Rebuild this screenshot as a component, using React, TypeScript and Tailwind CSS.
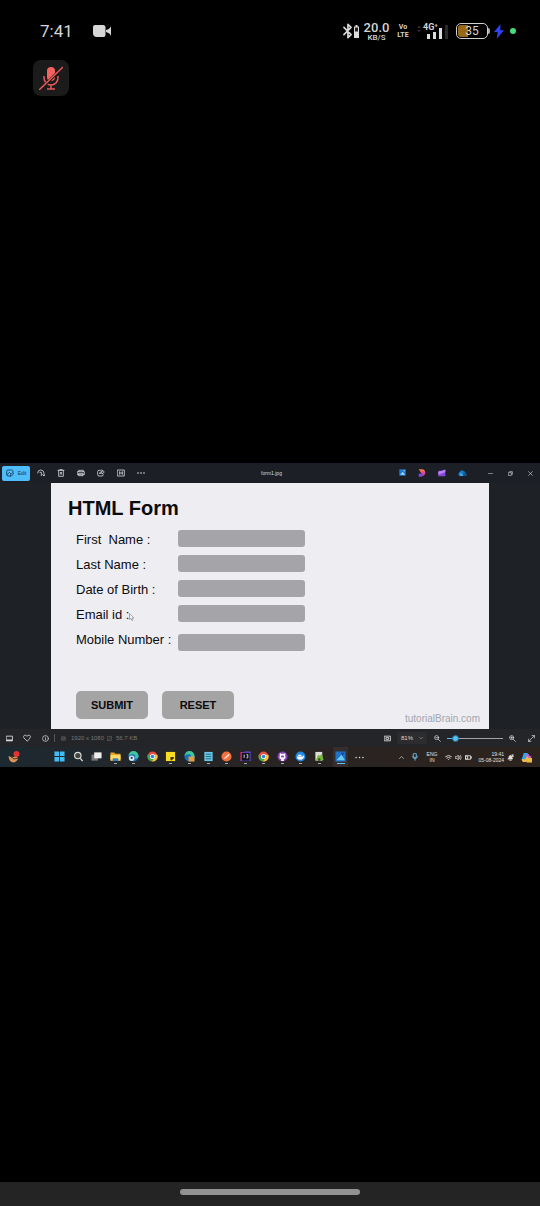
import type { ReactNode } from "react";

type IconProps = { children: ReactNode; className?: string; box?: string; width?: number };

function Line({ children, className = "size-2", box = "0 0 24 24", width = 2.4 }: IconProps) {
  return (
    <svg viewBox={box} className={className} fill="none" stroke="currentColor" strokeWidth={width} strokeLinecap="round" strokeLinejoin="round" aria-hidden="true">
      {children}
    </svg>
  );
}

function Art({ children, className = "size-3", box = "0 0 24 24" }: IconProps) {
  return (
    <svg viewBox={box} className={className} aria-hidden="true">
      {children}
    </svg>
  );
}

function StatusBar() {
  return (
    <header className="flex h-15 items-center pt-0.5 pr-6 pl-10 text-[#d4d4d4]">
      <time className="w-[34px] font-['Roboto',sans-serif] text-[17px] leading-6">7:41</time>
      <Art className="ml-[19px] h-3.5 w-[18px]" box="0 0 18 14">
        <path d="M2 1h8q2.500 0 2.500 2.500V11q0 2-2 2H4Q0 13 0 9V3q0-2 2-2Z" fill="#d6d6d6" />
        <path d="M13 6q4-1 5-4v10q-1-3-5-4Z" fill="#d6d6d6" />
      </Art>
      <div className="ml-auto flex items-center">
        <Line className="h-4 w-[11px]" box="0 0 11 18" width={1.9}>
          <path d="m1.500 5 8 8L6 16.500v-15L9.500 5l-8 8" />
        </Line>
        <Art className="ml-px h-[13px] w-[5px]" box="0 0 5 13">
          <path d="M1.500 0h2v1.500H5V13H0V1.500h1.500Z" fill="#ddd" />
          <path d="M1 2.500h3v4H1Z" fill="#222" />
        </Art>
        <div className="ml-1 w-[27px] text-center font-['Roboto',sans-serif] font-medium">
          <div className="text-[13px] leading-[13px]">20.0</div>
          <div className="text-[8px] leading-[8px]">KB/S</div>
        </div>
        <div className="ml-[7px] w-3 text-center font-['Roboto',sans-serif] text-[7px] leading-2 font-bold">
          <div>Vo</div>
          <div>LTE</div>
        </div>
        <Art className="ml-2 h-3 w-1" box="0 0 4 12">
          <path d="m0 3 2-2 2 2ZM0 5l2 2 2-2Z" fill="#333" />
        </Art>
        <div className="ml-0.5 w-[25px]">
          <div className="font-['Roboto',sans-serif] text-[9px] leading-2 font-bold">4G⁺</div>
          <div className="-mt-1.5 flex h-3.5 items-end justify-end gap-[3px]">
            <i className="h-[5px] w-[3px] bg-[#ddd]" />
            <i className="h-[7px] w-[3px] bg-[#ddd]" />
            <i className="h-[11px] w-[3px] bg-[#ddd]" />
            <i className="h-3.5 w-[3px] bg-[#292929]" />
          </div>
        </div>
        <div className="ml-2 flex h-4 w-8 items-center overflow-hidden rounded-[5px] border border-[#d0d0d0] p-px">
          <span className="w-full rounded-[3px] bg-linear-to-r from-[#986819] from-35% to-black to-35% text-center font-['Roboto',sans-serif] text-[12px] leading-3">35</span>
        </div>
        <i className="h-1.5 w-0.5 rounded-r-sm bg-[#aaa]" />
        <Art className="ml-1 h-[15px] w-2.5" box="0 0 11 16">
          <path d="M7 0 0 8.500h4L3 16l8-9.500H7Z" fill="#3042f5" />
        </Art>
        <i className="ml-1.5 size-1.5 rounded-full bg-[#46db7c]" />
      </div>
    </header>
  );
}

const tools: { name: string; icon: ReactNode }[] = [
  { name: "Rotate", icon: <path d="M2 12q0-9 9-9t10 9v8M17 17l4 4 3-4M9 10h4v10" /> },
  { name: "Delete", icon: <path d="M3 4h18M5 4v18h14V4M9 4V1h6v3M10 10l4 6m0-6-4 6" /> },
  { name: "Print", icon: <path d="M5 8V4h14v4M2 8h20v9H2ZM6 13h12v7H6Z" /> },
  { name: "Share", icon: <path d="M10 4H6Q2 4 2 8v9q0 4 4 4h9q4 0 4-4M15 3l7 6-7 6v-4q-5 0-7 4 0-8 7-8Z" /> },
  { name: "Slideshow", icon: <path d="M2 3h20v18H2ZM8 8v8m8-8v8M8 12h8" /> },
  { name: "More", icon: <path strokeWidth="5" d="M3 12h.1M12 12h.1M21 12h.1" /> },
];

function TitleBar() {
  return (
    <div className="flex h-5 items-center bg-[#1c1f25] text-[#d8dadd]">
      <button className="mr-px ml-0.5 flex h-[15px] w-7 shrink-0 items-center justify-center gap-1 rounded-xs bg-[#4fbdfa] text-[#153450]">
        <Line className="size-2">
          <path d="M11 21H6q-4 0-4-5V7q0-4 4-4h11q4 0 4 4v3M3 17l7-7 4 4m-1 7 1-4 6-6 3 3-6 6Z" />
        </Line>
        <span className="text-[5px] leading-2">Edit</span>
      </button>
      {tools.map((t) => (
        <button key={t.name} aria-label={t.name} className="flex w-5 shrink-0 justify-center">
          <Line>{t.icon}</Line>
        </button>
      ))}
      <h1 className="flex-1 text-center text-[5px] leading-2">form1.jpg</h1>
      <div className="mr-2 flex">
        <button aria-label="Photos" className="flex w-5 justify-center">
          <Art className="size-[7px]">
            <path d="M1 1h22v22H1Z" fill="#2479d0" />
            <path d="m4 20 9-10 8 10ZM14 4h6v5Z" fill="#9be4ff" />
          </Art>
        </button>
        <button aria-label="Designer" className="flex w-5 justify-center">
          <Art className="size-2">
            <path d="M2 1h10q10 1 10 11H10Z" fill="#f5794a" />
            <path d="M10 7h10q4 8-2 12L9 23q6-7 1-16Z" fill="#e0499b" />
            <path d="M2 15q7-5 13 0l-4 8H2Z" fill="#7c48da" />
          </Art>
        </button>
        <button aria-label="Clipchamp" className="flex w-5 justify-center">
          <Art className="size-2">
            <path d="M1 5h12l9-4v21H1Z" fill="#8548d8" />
            <path d="M1 8 22 2v7L1 17Z" fill="#c083f5" />
          </Art>
        </button>
        <button aria-label="OneDrive" className="flex w-5 justify-center">
          <Art className="h-2 w-[9px]" box="0 0 28 24">
            <path d="M4 21q-7-6 1-11Q9 0 17 5q5 1 5 6 9 5 2 10Z" fill="#1674bd" />
            <path d="m5 10 10 4 9 7H6Z" fill="#39a5e9" />
            <circle cx="20" cy="17" r="5" fill="#164f85" />
          </Art>
        </button>
      </div>
      <div className="flex">
        <button aria-label="Minimize" className="flex w-5 justify-center">
          <Line className="size-[5px]"><path d="M2 12h20" /></Line>
        </button>
        <button aria-label="Restore" className="flex w-5 justify-center">
          <Line className="size-[5px]" width={3}><path d="M3 8h13v13H3ZM8 3h13v13" /></Line>
        </button>
        <button aria-label="Close" className="flex w-5 justify-center">
          <Line className="size-[5px]" width={3}><path d="m3 3 18 18M21 3 3 21" /></Line>
        </button>
      </div>
    </div>
  );
}

const fields = [
  { id: "first", label: "First  Name :" },
  { id: "last", label: "Last Name :" },
  { id: "birth", label: "Date of Birth :" },
  { id: "email", label: "Email id :" },
  { id: "mobile", label: "Mobile Number :" },
];

function FormPicture() {
  return (
    <div className="bg-[#1e2227] pr-[51px] pl-[51px]">
      <form className="bg-[#eeedf2] pt-[13px] pl-[17px] text-[#0b0b0e]">
        <h2 className="text-[20px] leading-6 font-bold">HTML Form</h2>
        <div className="mt-[7px] ml-2 flex">
          <div className="flex w-[102px] flex-col">
            {fields.map((f) => (
              <label key={f.id} htmlFor={f.id} className="h-[25px] text-[13px] leading-[25px] whitespace-pre">
                {f.id === "email" ? (
                  <span className="relative">
                    {f.label}
                    <Art className="absolute top-1.5 left-full h-2 w-1.5" box="0 0 6 8">
                      <path d="M.500.500v6l1.500-1 1 2 1-.5-1-2h2Z" fill="#f4f4f7" stroke="#88888e" strokeWidth=".7" />
                    </Art>
                  </span>
                ) : (
                  f.label
                )}
              </label>
            ))}
          </div>
          <div className="flex flex-col gap-2 pt-[3px]">
            {fields.map((f) => (
              <input key={f.id} id={f.id} className="h-[17px] w-[127px] rounded-[3px] bg-[#a5a4a8] px-1 text-[11px] last:mt-1" />
            ))}
          </div>
        </div>
        <div className="mt-[39px] ml-2 flex gap-3.5">
          <button type="button" className="h-7 w-[72px] rounded-[5px] bg-[#a4a4a5] text-[11px] font-bold">SUBMIT</button>
          <button type="reset" className="h-7 w-[72px] rounded-[5px] bg-[#a4a4a5] text-[11px] font-bold">RESET</button>
        </div>
        <p className="-mt-1.5 pr-[9px] pb-1 text-right text-[10px] leading-3 text-[#a5a5ac]">tutorialBrain.com</p>
      </form>
    </div>
  );
}

function ViewerBar() {
  return (
    <div className="flex h-[18px] items-center bg-[#242528] text-[#dadada]">
      <button aria-label="Filmstrip" className="flex w-[18px] justify-center">
        <Line className="size-[7px]" width={3}><path d="M2 4h20v16H2ZM3 17h18v2H3Z" /></Line>
      </button>
      <button aria-label="Favourite" className="flex w-[18px] justify-center">
        <Line className="size-2"><path d="M12 21 3 12Q-1 7 4 4q5-2 8 3 3-5 8-3 5 3 1 8Z" /></Line>
      </button>
      <button aria-label="Information" className="flex w-[18px] justify-center">
        <Line className="size-[7px]"><circle cx="12" cy="12" r="10" /><path d="M12 11v6m0-10v.1" /></Line>
      </button>
      <i className="mr-1.5 h-2 w-px bg-[#555]" />
      <div className="flex items-center text-[6px] leading-2 text-[#777]">
        <Line className="size-[5px]"><path d="M3 4h18v16H3ZM7 9h10v6H7Z" /></Line>
        <span className="ml-[5px] w-9">1920 x 1080</span>
        <Line className="size-[5px]"><path d="M3 3h18v18H3ZM4 20 20 4" /></Line>
        <span className="ml-1">56.7 KB</span>
      </div>
      <div className="ml-auto flex items-center">
        <button aria-label="Fit to window">
          <Line className="size-[7px]" width={3}><path d="M2 4h20v16H2ZM8 9h8v6H8Z" /></Line>
        </button>
        <button className="ml-1.5 flex h-3 w-[30px] items-center justify-center gap-1.5 rounded-xs bg-[#2d2d30] text-[6px] leading-2">
          81%
          <Line className="size-1"><path d="m3 8 9 9 9-9" /></Line>
        </button>
        <button aria-label="Zoom out" className="ml-[7px]">
          <Line className="size-[7px]"><circle cx="9" cy="9" r="7" /><path d="m14 14 8 8M6 9h6" /></Line>
        </button>
        <input
          type="range"
          aria-label="Zoom"
          defaultValue={10}
          className="ml-1.5 h-2 w-14 appearance-none bg-transparent [&::-webkit-slider-runnable-track]:h-px [&::-webkit-slider-runnable-track]:bg-linear-to-r [&::-webkit-slider-runnable-track]:from-[#4bbcf5] [&::-webkit-slider-runnable-track]:from-15% [&::-webkit-slider-runnable-track]:to-[#a4a4a4] [&::-webkit-slider-runnable-track]:to-15% [&::-webkit-slider-thumb]:-mt-[3px] [&::-webkit-slider-thumb]:size-[7px] [&::-webkit-slider-thumb]:appearance-none [&::-webkit-slider-thumb]:rounded-full [&::-webkit-slider-thumb]:border [&::-webkit-slider-thumb]:border-[#356783] [&::-webkit-slider-thumb]:bg-[#4fc3fa]"
        />
        <button aria-label="Zoom in" className="ml-1.5">
          <Line className="size-[7px]"><circle cx="9" cy="9" r="7" /><path d="m14 14 8 8M6 9h6M9 6v6" /></Line>
        </button>
        <button aria-label="Full screen" className="mr-[5px] ml-3">
          <Line className="size-[7px]"><path d="M14 2h8v8m0-8L2 22m0-8v8h8" /></Line>
        </button>
      </div>
    </div>
  );
}

const chrome = (
  <>
    <circle cx="12" cy="12" r="11" fill="#e94b3e" />
    <path d="M2.500 6.500A11 11 0 0 0 11 23l5-8H8Z" fill="#38a852" />
    <path d="M23 10a11 11 0 0 1-12 13l5-9-1-6h7Z" fill="#f7c52d" />
    <circle cx="12" cy="12" r="5.500" fill="#fff" />
    <circle cx="12" cy="12" r="4" fill="#397fe3" />
  </>
);

const edge = (
  <>
    <circle cx="12" cy="12" r="11" fill="#1671b9" />
    <path d="M1 11a11 11 0 0 1 22 0q0 6-8 5 3-8-4-9Q4 6 1 11Z" fill="#3fc6a0" />
  </>
);

const apps: { name: string; open: boolean; icon: ReactNode }[] = [
  { name: "Start", open: false, icon: <path d="M1 1h10v10H1Zm12 0h10v10H13ZM1 13h10v10H1Zm12 0h10v10H13Z" fill="#42bdf3" /> },
  { name: "Search", open: false, icon: <><circle cx="10.500" cy="10" r="7" fill="#444" stroke="#ddd" strokeWidth="2.500" /><path d="m16 16 5 6" stroke="#ddd" strokeWidth="3" /></> },
  { name: "Task view", open: false, icon: <><path d="M1 8h14v13H1Z" fill="#777" /><path d="M7 3h16v13H7Z" fill="#eee" /></> },
  { name: "Files", open: true, icon: <><path d="M1 3h8l3 3h11v16H1Z" fill="#e3a62b" /><path d="M1 9h22v10H1Z" fill="#ffdc67" /><path d="M6 16h12v6H6Z" fill="#2b7fc8" /></> },
  { name: "Edge profile", open: true, icon: <>{edge}<circle cx="8" cy="16" r="6" fill="#dce7ed" /><circle cx="8" cy="15" r="2.500" fill="#345" /></> },
  { name: "Chrome", open: false, icon: chrome },
  { name: "Sticky Notes", open: true, icon: <><path d="M2 2h20v20H2Z" fill="#fbdc20" /><path d="M12 13h7v3l-4 4h-3Z" fill="#373113" /></> },
  { name: "Edge", open: true, icon: <>{edge}<path d="M10 12h13v11H10Z" fill="#e29e47" /></> },
  { name: "Notepad", open: true, icon: <><path d="M3 2h18v20H3Z" fill="#67c9e7" /><path d="M6 7h12M6 12h12M6 17h12" stroke="#1c627e" strokeWidth="2" /></> },
  { name: "Postman", open: true, icon: <><circle cx="12" cy="12" r="11" fill="#f3703e" /><path d="m6 18 3-5 8-7 2 2-7 7Z" fill="#ffe3d5" /></> },
  { name: "IntelliJ", open: true, icon: <><path d="M1 2h13l9 20H1Z" fill="#d52c78" /><path d="M10 1h13v21H1Z" fill="#604ee4" /><path d="M4 4h17v17H4Z" fill="#11101d" /><path d="M9 8v7M14 8h3v7h-3" stroke="#ddd" strokeWidth="2" fill="none" /></> },
  { name: "Chrome work", open: true, icon: chrome },
  { name: "GitHub", open: true, icon: <><circle cx="12" cy="12" r="11" fill="#8540b8" /><path d="M6 5l4 1h4l4-1v6q2 6-3 7v4H9v-4q-5-1-3-7Z" fill="#fff" /><path d="M9 10h6v4H9Z" fill="#8540b8" /></> },
  { name: "Docker", open: true, icon: <><circle cx="12" cy="12" r="11" fill="#2587e5" /><path d="M4 12h12l3-3 1 3q-2 7-9 7-6 0-7-7ZM7 8h7v3H7Z" fill="#fff" /></> },
  { name: "Notepad++", open: true, icon: <><path d="M3 2h15v19H3Z" fill="#ddd" /><path d="m4 20 5-12q5 5 8-2l4 14Z" fill="#76b936" /><path d="M9 17q3-4 5 0v4H9Z" fill="#37551d" /></> },
];

function Taskbar() {
  return (
    <nav className="flex h-5 items-center bg-linear-to-r from-[#1c2930] via-[#272425] via-45% to-[#2d231d] text-[#e0e0e0]">
      <button aria-label="Widgets" className="ml-2">
        <Art className="size-3">
          <path d="M1 10q9 5 16-1l3 7q-5 9-13 6-5-2-6-12Z" fill="#d99357" />
          <path d="m4 10 8 6 9-2" stroke="#583524" strokeWidth="2" fill="none" />
          <circle cx="17" cy="6" r="6" fill="#e33432" />
        </Art>
      </button>
      <div className="ml-[34px] flex w-[271px] justify-between">
        {apps.map((a) => (
          <button key={a.name} aria-label={a.name} className="flex h-4 w-[11px] flex-col items-center gap-px pt-0.5">
            <Art className="size-[11px] shrink-0">{a.icon}</Art>
            {a.open && <i className="h-px w-[3px] shrink-0 bg-[#aaa]" />}
          </button>
        ))}
      </div>
      <button aria-label="Photos" className="ml-2 flex h-5 w-[15px] flex-col items-center gap-px bg-white/5 pt-1">
        <Art className="size-[11px]">
          <path d="M1 1h22v22H1Z" fill="#2072c7" />
          <path d="m3 20 11-12 8 12Z" fill="#67cbf7" />
          <path d="m13 3 8 1-5 7Z" fill="#164a91" />
        </Art>
        <i className="h-px w-2 bg-[#5fc6f5]" />
      </button>
      <button aria-label="More apps" className="ml-[7px]">
        <Line className="size-[9px]" width={4}><path d="M3 12h.1M12 12h.1M21 12h.1" /></Line>
      </button>
      <div className="ml-auto flex h-full items-center">
        <button aria-label="Hidden icons"><Line className="size-[5px]" width={3}><path d="m2 17 10-10 10 10" /></Line></button>
        <Line className="ml-2 h-2 w-1.5 text-[#64a9d0]" box="0 0 18 24" width={3}><path d="M5 2h8v11H5ZM2 10q0 7 7 7t7-7M9 17v5" /></Line>
        <div className="ml-2 w-3 text-center text-[5px] leading-[6px]">
          <div>ENG</div>
          <div>IN</div>
        </div>
        <Line className="ml-[7px] size-[7px]" width={3}><path d="M2 9q10-9 20 0M6 14q6-6 12 0M12 19v.1" /></Line>
        <Line className="ml-[3px] size-[7px]" width={2.5}><path d="M2 9h4l5-5v16l-5-5H2ZM15 8q3 4 0 8M19 5q5 7 0 14" /></Line>
        <Line className="ml-[3px] size-[7px]" width={3}><path d="M2 6h17v12H2ZM22 10v4M3 7h6v10H3Z" /></Line>
        <time className="ml-1 w-7 text-right text-[5px] leading-[6px]">
          <div>19:41</div>
          <div>05-08-2024</div>
        </time>
        <Line className="ml-[3px] size-[7px]" width={3}><path d="M4 17h15l-2-4V8q-5-6-10 0v5ZM9 21h6M17 3h5l-5 5h5" fill="#ddd" /></Line>
        <button aria-label="Copilot" className="mr-2 ml-[7px]">
          <Art className="size-[11px]">
            <path d="M6 2h8l3 7-5 4-5 5H1Z" fill="#33a5ec" />
            <path d="M13 3q5 0 6 6h4l-5 12H8Z" fill="#ce63cb" />
            <path d="M1 16h8l4-6h3l-5 12H4Z" fill="#f2bd42" />
            <path d="M12 13h12v10H12Z" fill="#ebbd38" />
          </Art>
        </button>
      </div>
    </nav>
  );
}

export default function App() {
  return (
    <div className="flex min-h-screen flex-col bg-black font-['Liberation_Sans',sans-serif]">
      <StatusBar />
      <div className="ml-[33px] flex size-9 items-center justify-center rounded-lg bg-[#1b1b1b]">
        <Art className="size-6">
          <rect x="8" y="1" width="8" height="14" rx="4" fill="#f4625f" />
          <path d="M5 10v2a7 7 0 0 0 14 0v-2M12 19v4M8 23h8" fill="none" stroke="#e65a58" strokeWidth="1.500" />
          <path d="m2 23 21-21" stroke="#1b1b1b" strokeWidth="3" />
          <path d="M0 24 24 1" stroke="#e65a58" strokeWidth="1.500" />
        </Art>
      </div>
      <div className="grow-[367]" />
      <main>
        <TitleBar />
        <FormPicture />
        <ViewerBar />
        <Taskbar />
      </main>
      <div className="grow-[415]" />
      <footer className="flex h-6 justify-center bg-[#242424] pt-[7px]">
        <div className="h-1.5 w-1/3 rounded-full bg-[#929292]" />
      </footer>
    </div>
  );
}
